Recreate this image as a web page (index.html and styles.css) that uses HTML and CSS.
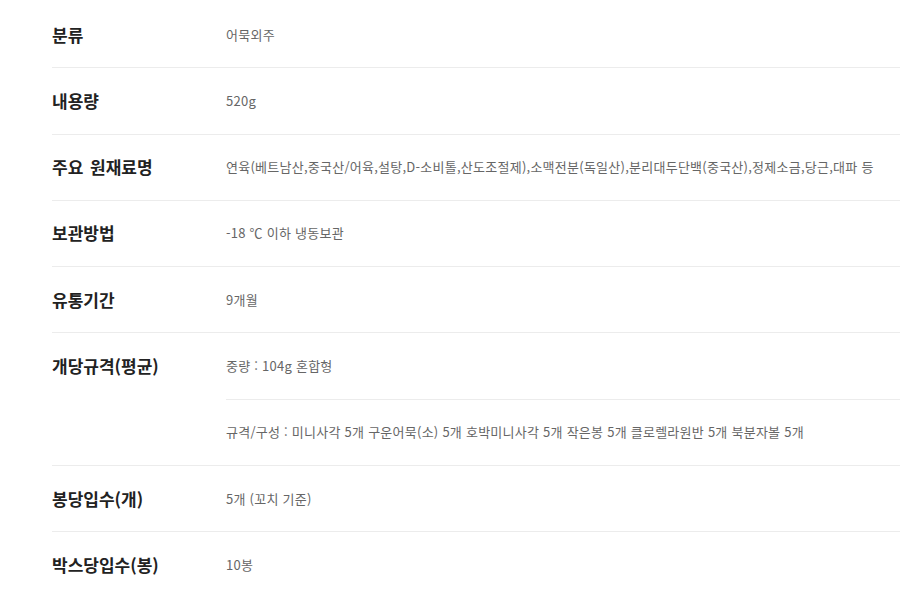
FILE: index.html
```html
<!DOCTYPE html>
<html lang="ko">
<head>
<meta charset="utf-8">
<link rel="stylesheet" href="styles.css">
</head>
<body>
<div class="spec">
  <div class="row"><div class="label">분류</div><div class="vals"><div class="val">어묵외주</div></div></div>
  <div class="row"><div class="label">내용량</div><div class="vals"><div class="val">520g</div></div></div>
  <div class="row"><div class="label">주요 원재료명</div><div class="vals"><div class="val">연육(베트남산,중국산/어육,설탕,D-소비톨,산도조절제),소맥전분(독일산),분리대두단백(중국산),정제소금,당근,대파 등</div></div></div>
  <div class="row"><div class="label">보관방법</div><div class="vals"><div class="val">-18 ℃ 이하 냉동보관</div></div></div>
  <div class="row"><div class="label">유통기간</div><div class="vals"><div class="val">9개월</div></div></div>
  <div class="row"><div class="label">개당규격(평균)</div><div class="vals"><div class="val">중량 : 104g 혼합형</div><div class="val">규격/구성 : 미니사각 5개 구운어묵(소) 5개 호박미니사각 5개 작은봉 5개 클로렐라원반 5개 북분자볼 5개</div></div></div>
  <div class="row"><div class="label">봉당입수(개)</div><div class="vals"><div class="val">5개 (꼬치 기준)</div></div></div>
  <div class="row"><div class="label">박스당입수(봉)</div><div class="vals"><div class="val">10봉</div></div></div>
</div>
</body>
</html>
```
FILE: styles.css
```css
html, body {
  margin: 0;
  padding: 0;
  background: #ffffff;
}
body {
  font-family: "Noto Sans CJK KR", "Noto Sans", sans-serif;
  overflow: hidden;
}
.spec {
  margin-left: 52px;
  width: 860px;
  padding-top: 2px;
}
.row {
  display: flex;
  border-bottom: 1px solid #ececec;
}
.row:last-child {
  border-bottom: none;
}
.label {
  width: 174px;
  flex: none;
  padding: 22.65px 0;
  line-height: 20px;
  font-size: 17px;
  font-weight: bold;
  color: #222222;
  word-spacing: 2px;
}
.vals {
  flex: 1;
}
.val {
  padding: 22.65px 0;
  line-height: 20px;
  font-size: 13px;
  letter-spacing: 0.25px;
  color: #666666;
  white-space: nowrap;
}
.val + .val {
  border-top: 1px solid #ececec;
}
```
